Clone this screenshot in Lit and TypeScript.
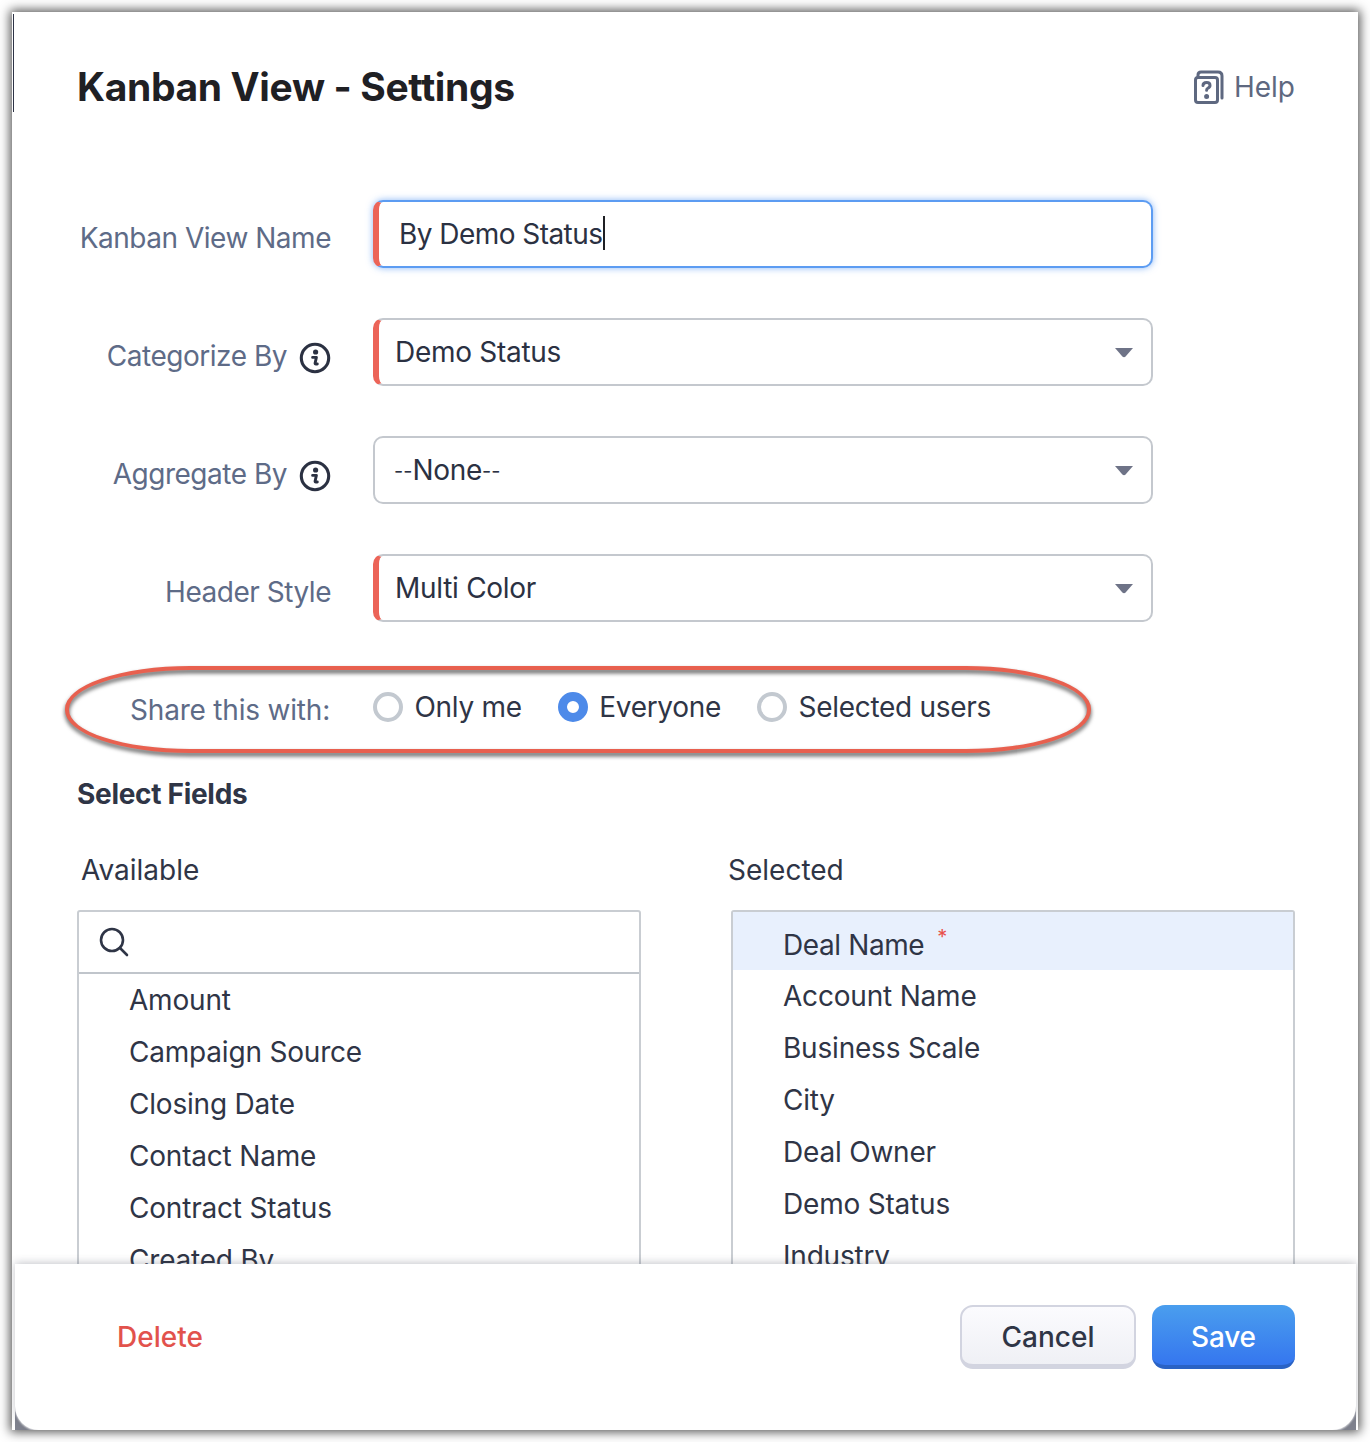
import { LitElement, html, css, svg } from "lit";
import { customElement } from "lit/decorators.js";

const infoIcon = html`<svg class="info" viewBox="0 0 32 32" width="32" height="32" aria-hidden="true">
  <circle cx="16" cy="16" r="13.7" fill="none" stroke="#2b3142" stroke-width="3.1"></circle>
  <circle cx="16.6" cy="10" r="2.6" fill="#2b3142"></circle>
  <path d="M13.6 15.4h3.8l-1.3 5.6q-.2 1 .8 1h1.4" fill="none" stroke="#2b3142" stroke-width="2.9" stroke-linecap="round" stroke-linejoin="round"></path>
</svg>`;

const arrow = svg`<path d="M0 0h18l-7.4 8.4q-1.6 1.6-3.2 0z" fill="#6e7387"></path>`;

@customElement("app-root")
export class AppRoot extends LitElement {
  static styles = css`
    :host {
      display: block;
      width: 1370px;
      height: 1442px;
      background: #fff;
      font-family: Inter, "Noto Sans", sans-serif;
      color: #2f3546;
      overflow: hidden;
    }
    * { box-sizing: border-box; }
    .window {
      position: relative;
      margin: 12px 12px 0;
      width: 1346px;
      height: 1418px;
      background: #fff;
      box-shadow: 0 0 10px 2px rgba(0, 0, 0, 0.68);
      display: flex;
      flex-direction: column;
      overflow: hidden;
    }
    .edge {
      position: absolute;
      left: 1px;
      top: 2px;
      width: 1px;
      height: 98px;
      background: #2e3346;
    }
    .body {
      flex: 1;
      min-height: 0;
      overflow: hidden;
      padding: 0 63px 0 65px;
      background: #fff;
    }
    .head {
      display: flex;
      justify-content: space-between;
      align-items: center;
      height: 80px;
      margin-top: 35px;
    }
    h1 { margin: -2px 0 0; font-size: 39px; font-weight: 700; letter-spacing: -0.36px; color: #1f2024; }
    .help { display: flex; align-items: center; gap: 10px; font-size: 28px; color: #5e6880; }
    .form { margin-top: 73px; display: flex; flex-direction: column; gap: 50px; margin-left: -65px; }
    .row { display: flex; align-items: center; height: 68px; }
    .label {
      width: 319px;
      margin-right: 42px;
      display: flex;
      justify-content: flex-end;
      align-items: center;
      gap: 12px;
      font-size: 28px;
      letter-spacing: -0.48px;
      color: #5e6b87;
      padding-top: 8px;
    }
    .info { flex: none; margin-top: 4px; }
    .field {
      width: 780px;
      height: 68px;
      border: 2px solid #c4c8ce;
      border-radius: 10px;
      display: flex;
      align-items: center;
      justify-content: space-between;
      padding: 0 18px 0 19px;
      font-size: 28px;
      letter-spacing: -0.28px;
      color: #2b3142;
      background: #fff;
    }
    .field svg { margin-top: 2px; }
    .dash { font-size: 20px; letter-spacing: 0; vertical-align: 2px; }
    .req { border-left: 6px solid #ec6458; padding-left: 16px; }
    .focus { border-color: #5c9cf2; border-left-color: #ec6458; box-shadow: 0 0 7px rgba(60, 135, 240, 0.6); padding-left: 20px; padding-bottom: 2px; letter-spacing: -0.55px; }
    .caret { display: inline-block; width: 2px; height: 34px; background: #1f2024; margin-left: 1px; vertical-align: -6px; }
    .share { display: flex; align-items: center; height: 60px; margin-top: 55px; margin-left: -65px; position: relative; }
    .share .label { padding-top: 0; margin-top: 6px; letter-spacing: -0.2px; width: 318px; margin-right: 43px; }
    .radios { display: flex; align-items: center; font-size: 28px; letter-spacing: -0.3px; color: #2f3546; }
    .radio { display: flex; align-items: center; gap: 11.5px; margin-right: 36px; }
    .dot { width: 30px; height: 30px; border-radius: 50%; border: 4px solid #c3c9d0; background: #fff; flex: none; }
    .dot.on { border: 9px solid #4d8ae9; }
    .oval {
      position: absolute;
      left: 53px;
      top: -11px;
      width: 1026px;
      height: 87px;
      border: 4px solid #e8604f;
      border-radius: 125px / 43px;
      filter: drop-shadow(0 3px 2px rgba(0, 0, 0, 0.68));
      pointer-events: none;
    }
    h2 { margin: 39px 0 0; font-size: 28px; font-weight: 700; letter-spacing: -0.3px; line-height: 36px; color: #2f3546; }
    .cols { display: flex; justify-content: space-between; margin-top: 40px; }
    .col { width: 564px; }
    .col-title { font-size: 28px; line-height: 36px; margin: 0 0 22px 4px; }
    .col.right .col-title { margin-left: -3px; }
    .box {
      width: 564px;
      height: 500px;
      border: 2px solid #c9cdd2;
      border-radius: 3px;
      font-size: 28px;
      letter-spacing: -0.2px;
    }
    .search { height: 62px; border-bottom: 2px solid #c0c5cb; display: flex; align-items: center; padding-left: 19px; }
    .item { height: 52px; display: flex; align-items: center; padding-left: 50px; color: #2f3546; white-space: nowrap; }
    .item.sel { background: #e8f0fd; height: 58px; padding-top: 8px; letter-spacing: -0.4px; }
    .star { color: #e8514a; font-size: 20px; margin: -16px 0 0 13px; }
    .foot-wrap {
      flex: none;
      height: 166px;
      margin: 0 2px 0 3px;
      background: #80838f;
      position: relative;
    }
    .footer {
      height: 100%;
      background: #fff;
      border-radius: 0 0 24px 24px;
      box-shadow: 0 -1px 8px rgba(60, 64, 80, 0.3), 0 1px 2px #fff;
      display: flex;
      align-items: flex-start;
      justify-content: space-between;
      padding: 41px 61px 0 102px;
    }
    .delete { font-size: 28px; font-weight: 500; color: #e2524c; line-height: 64px; }
    .btns { display: flex; gap: 16px; }
    .btn {
      height: 64px;
      border-radius: 13px;
      font-size: 28px;
      font-weight: 500;
      display: flex;
      align-items: center;
      justify-content: center;
      padding-top: 2px;
    }
    .cancel {
      width: 176px;
      color: #2f3546;
      border: 2px solid #d2d4e0;
      border-bottom-width: 5px;
      background: linear-gradient(#fbfbfe, #eff0f5);
    }
    .save {
      width: 143px;
      color: #fff;
      letter-spacing: -0.2px;
      padding-top: 4px;
      border-bottom: 4px solid #2a62c4;
      background: linear-gradient(#4a9eee, #3576ef);
    }
  `;

  render() {
    const avail = ["Amount", "Campaign Source", "Closing Date", "Contact Name", "Contract Status", "Created By"];
    const sel = ["Account Name", "Business Scale", "City", "Deal Owner", "Demo Status", "Industry"];
    return html`
      <div class="window">
        <div class="edge"></div>
        <div class="body">
          <div class="head">
            <h1>Kanban View - Settings</h1>
            <div class="help">
              <svg width="30" height="34" viewBox="0 0 30 34" fill="none" stroke="#5e6880" stroke-width="3" stroke-linejoin="round" stroke-linecap="round" aria-hidden="true">
                <rect x="1.5" y="7.5" width="22" height="25" rx="2.5"></rect>
                <path d="M4 7.5V5q0-3 3-3h17q4 0 4 4v22"></path>
                <path d="M9 15.5q0-3 3.6-3 3.4 0 3.4 2.8 0 2-2 2.8-1.4.6-1.4 2.2"></path>
                <circle cx="12.6" cy="26.6" r="1" fill="#5e6880"></circle>
              </svg>
              Help
            </div>
          </div>

          <div class="form">
            <div class="row">
              <div class="label">Kanban View Name</div>
              <div class="field req focus"><span>By Demo Status<i class="caret"></i></span></div>
            </div>
            <div class="row">
              <div class="label">Categorize By ${infoIcon}</div>
              <div class="field req"><span>Demo Status</span><svg width="18" height="10">${arrow}</svg></div>
            </div>
            <div class="row">
              <div class="label">Aggregate By ${infoIcon}</div>
              <div class="field"><span><span class="dash">--</span>None<span class="dash">--</span></span><svg width="18" height="10">${arrow}</svg></div>
            </div>
            <div class="row">
              <div class="label">Header Style</div>
              <div class="field req"><span>Multi Color</span><svg width="18" height="10">${arrow}</svg></div>
            </div>
          </div>

          <div class="share">
            <div class="label">Share this with:</div>
            <div class="radios">
              <div class="radio"><span class="dot"></span>Only me</div>
              <div class="radio"><span class="dot on"></span>Everyone</div>
              <div class="radio"><span class="dot"></span>Selected users</div>
            </div>
            <div class="oval"></div>
          </div>

          <h2>Select Fields</h2>

          <div class="cols">
            <div class="col">
              <div class="col-title">Available</div>
              <div class="box avail">
                <div class="search">
                  <svg width="32" height="32" viewBox="0 0 32 32" fill="none" stroke="#2f3546" stroke-width="2.6" stroke-linecap="round" aria-hidden="true">
                    <circle cx="14" cy="14" r="11"></circle>
                    <path d="M22 22l7 7"></path>
                  </svg>
                </div>
                <div class="list">${avail.map((t) => html`<div class="item">${t}</div>`)}</div>
              </div>
            </div>
            <div class="col right">
              <div class="col-title">Selected</div>
              <div class="box">
                <div class="item sel">Deal Name<span class="star">*</span></div>
                ${sel.map((t) => html`<div class="item">${t}</div>`)}
              </div>
            </div>
          </div>
        </div>
        <div class="foot-wrap">
          <div class="footer">
            <div class="delete">Delete</div>
            <div class="btns">
              <div class="btn cancel">Cancel</div>
              <div class="btn save">Save</div>
            </div>
          </div>
        </div>
      </div>
    `;
  }
}
